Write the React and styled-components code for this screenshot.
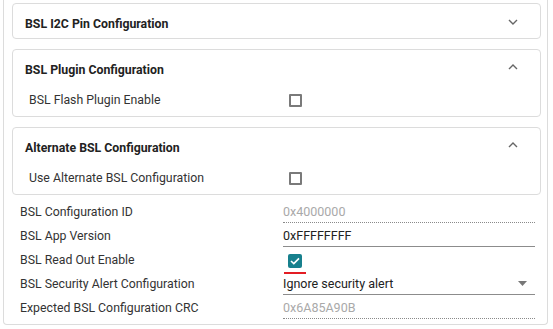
import styled, { createGlobalStyle } from "styled-components";

const GlobalStyle = createGlobalStyle`
  body {
    margin: 0;
    background: #fff;
    font-family: Roboto, "Liberation Sans", sans-serif;
    font-size: 12.3px;
    color: #333;
  }
`;

const Outer = styled.div`
  margin-left: 3px;
  width: 545px;
  box-sizing: border-box;
  border: 1px solid #dcdcdc;
  border-top: none;
  border-radius: 0 0 4px 4px;
  padding: 3px 6px 2px 8px;
`;

const Panel = styled.section`
  border: 1px solid #dcdcdc;
  border-radius: 4px;

  & + & {
    margin-top: 10px;
  }
`;

const PanelHeader = styled.div`
  display: flex;
  align-items: center;
  justify-content: space-between;
  padding: 11px 22px 5px 12px;
  line-height: 18px;
  font-weight: 700;
  color: #222;
`;

const Chevron = styled.svg`
  width: 10px;
  height: 10px;
  margin-top: ${(p) => (p.$up ? "-6px" : "-4px")};
`;

const PanelRow = styled.div`
  display: grid;
  grid-template-columns: 259px 1fr;
  align-items: center;
  height: 32px;
  padding-left: 16px;
`;

const Box = styled.span`
  display: inline-block;
  width: 13px;
  height: 13px;
  box-sizing: border-box;
  border: 2px solid #7a7a7a;
  border-radius: 1px;
  margin-left: 1px;
`;

const Fields = styled.div`
  padding: 6px 0 1px 8px;
`;

const FieldRow = styled.div`
  display: grid;
  grid-template-columns: 263px 252px;
  height: 24px;
`;

const Label = styled.div`
  line-height: 22px;
  color: #333;
`;

const Input = styled.div`
  height: 21px;
  line-height: 21px;
  border-bottom: 1px ${(p) => (p.$disabled ? "dotted #8a8a8a" : "solid #8c8c8c")};
  color: ${(p) => (p.$disabled ? "#a9a9a9" : "#222")};
  font-size: 12.5px;
  display: flex;
  justify-content: space-between;
  align-items: center;
`;

const CheckWrap = styled.div`
  display: flex;
  flex-direction: column;
  align-items: flex-start;
  padding-top: 5px;
`;

const CheckedBox = styled.span`
  display: flex;
  align-items: center;
  justify-content: center;
  width: 14px;
  height: 14px;
  margin-left: 5px;
  background: #17808d;
  border-radius: 2px;
`;

const RedBar = styled.span`
  width: 22px;
  height: 2px;
  margin-top: 4px;
  margin-left: 1px;
  background: #e31d24;
`;

const Arrow = styled.svg`
  width: 9px;
  height: 5px;
  margin-right: 8px;
`;

const ChevronIcon = ({ up }) => (
  <Chevron $up={up} viewBox="0 0 10 10">
    <polyline
      points={up ? "1,7 5,3 9,7" : "1,3 5,7 9,3"}
      fill="none"
      stroke="#666"
      strokeWidth="1.4"
    />
  </Chevron>
);

const Section = ({ title, up, rows = [] }) => (
  <Panel>
    <PanelHeader>
      {title}
      <ChevronIcon up={up} />
    </PanelHeader>
    {rows.map((r) => (
      <PanelRow key={r}>
        <span>{r}</span>
        <Box />
      </PanelRow>
    ))}
  </Panel>
);

export default function App() {
  return (
    <>
      <GlobalStyle />
      <Outer>
        <Section title="BSL I2C Pin Configuration" />
        <Section
          title="BSL Plugin Configuration"
          up
          rows={["BSL Flash Plugin Enable"]}
        />
        <Section
          title="Alternate BSL Configuration"
          up
          rows={["Use Alternate BSL Configuration"]}
        />
        <Fields>
          <FieldRow>
            <Label>BSL Configuration ID</Label>
            <Input $disabled>0x4000000</Input>
          </FieldRow>
          <FieldRow>
            <Label>BSL App Version</Label>
            <Input>0xFFFFFFFF</Input>
          </FieldRow>
          <FieldRow>
            <Label>BSL Read Out Enable</Label>
            <CheckWrap>
              <CheckedBox>
                <svg width="10" height="8" viewBox="0 0 10 8">
                  <polyline
                    points="1,4 3.8,6.6 9,1.4"
                    fill="none"
                    stroke="#fff"
                    strokeWidth="1.6"
                  />
                </svg>
              </CheckedBox>
              <RedBar />
            </CheckWrap>
          </FieldRow>
          <FieldRow>
            <Label>BSL Security Alert Configuration</Label>
            <Input>
              Ignore security alert
              <Arrow viewBox="0 0 9 5">
                <polygon points="0,0 9,0 4.5,5" fill="#777" />
              </Arrow>
            </Input>
          </FieldRow>
          <FieldRow>
            <Label>Expected BSL Configuration CRC</Label>
            <Input $disabled>0x6A85A90B</Input>
          </FieldRow>
        </Fields>
      </Outer>
    </>
  );
}
